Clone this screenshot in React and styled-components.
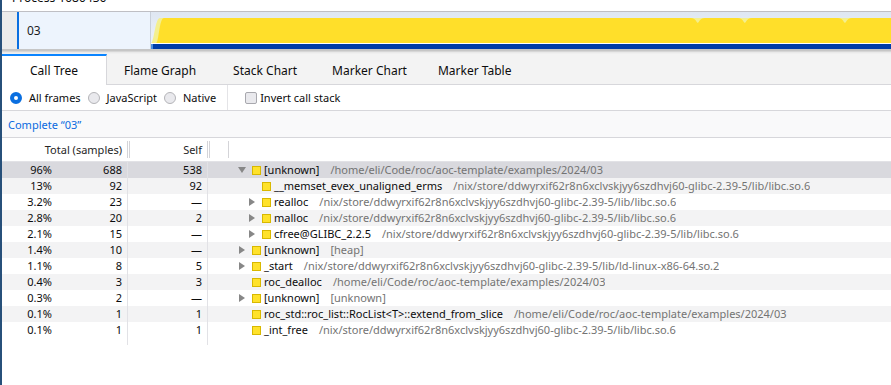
import React from "react";
import styled, { createGlobalStyle } from "styled-components";

const Global = createGlobalStyle`
  html, body { margin: 0; padding: 0; background: #fff; }
  body { font-family: "Noto Sans", "Open Sans", sans-serif; color: #0c0c0d; }
  * { box-sizing: border-box; }
`;

const Page = styled.div`
  width: 891px;
  height: 385px;
  overflow: hidden;
  border-left: 2px solid #27507a;
  display: flex;
  flex-direction: column;
  background: #fff;
`;

const ProcessHeader = styled.div`
  height: 12px;
  overflow: hidden;
  padding-left: 10px;
  border-bottom: 1px solid #bfbfc4;
  font-size: 12px;
`;

const ProcessTitle = styled.div`
  line-height: 16px;
  margin-top: -10px;
  color: #0c0c0d;
`;

const TrackRow = styled.div`
  display: flex;
  height: 37px;
`;

const TrackIndent = styled.div`
  width: 15px;
  background: #ececec;
  flex-shrink: 0;
`;

const TrackLabel = styled.div`
  width: 134px;
  flex-shrink: 0;
  background: #edf4fd;
  border-left: 2px solid #0a6fe0;
  border-right: 1px solid #c9d0da;
  display: flex;
  align-items: center;
  padding-left: 8px;
  font-size: 12px;
  color: #1c1c1e;
`;

const TrackGraph = styled.div`
  flex: 1;
  display: flex;
  flex-direction: column;
  background: linear-gradient(#dfe7f2, #eef3fa);
`;

const GraphSvg = styled.svg`
  display: block;
  width: 100%;
  height: 31px;
`;

const GraphGap = styled.div`
  height: 1px;
  background: #fff;
`;

const CpuBar = styled.div`
  height: 5px;
  background: #003da8;
  border-left: 2px solid #4a8ee0;
`;

const Splitter = styled.div`
  height: 5px;
  background: linear-gradient(#c6c6c6 0, #c6c6c6 2px, #e6e6e6 3px, #f2f2f2 5px);
`;

const TabBar = styled.div`
  display: flex;
  height: 31px;
  background: #f3f3f3;
  border-bottom: 1px solid #d7d7db;
`;

const Tab = styled.div`
  display: flex;
  align-items: center;
  justify-content: center;
  font-size: 12px;
  color: #0c0c0d;
  padding: 0 ${(p) => p.$pad}px;
  ${(p) =>
    p.$selected
      ? `background:#fff;border-top:2px solid #0a84ff;border-right:1px solid #d7d7db;margin-bottom:-1px;padding-bottom:1px;`
      : `border-top:2px solid transparent;`}
`;

const SettingsBar = styled.div`
  display: flex;
  align-items: center;
  height: 26px;
  border-bottom: 1px solid #d7d7db;
  font-size: 11px;
  color: #0c0c0d;
`;

const RadioGroup = styled.div`
  display: flex;
  align-items: center;
  height: 100%;
  padding-left: 8px;
  padding-right: 4px;
  border-right: 1px solid #e4e4e7;
`;

const RadioLabel = styled.label`
  display: flex;
  align-items: center;
  margin-right: 7px;
`;

const Radio = styled.span`
  width: 12px;
  height: 12px;
  border-radius: 50%;
  margin-right: 7px;
  ${(p) =>
    p.$checked
      ? `border:4px solid #0a6fe0;background:#fff;`
      : `border:1px solid #b4b4b8;background:#e9e9ed;`}
`;

const CheckLabel = styled.label`
  display: flex;
  align-items: center;
  margin-left: 17px;
`;

const Checkbox = styled.span`
  width: 12px;
  height: 12px;
  border: 1px solid #a8a8ae;
  border-radius: 2px;
  background: #e9e9ed;
  margin-right: 3px;
`;

const Breadcrumb = styled.div`
  height: 27px;
  display: flex;
  align-items: center;
  padding-left: 6px;
  font-size: 11px;
  color: #0a6ae0;
  background: #f9f9fa;
  border-bottom: 1px solid #d7d7db;
`;

const TreeHeader = styled.div`
  display: flex;
  align-items: center;
  height: 24px;
  border-bottom: 1px solid #e2e2e6;
  font-size: 11px;
  color: #262626;
`;

const HeaderCell = styled.div`
  width: ${(p) => p.$w}px;
  flex-shrink: 0;
  text-align: right;
  padding-right: 5px;
`;

const Resizer = styled.div`
  width: 3px;
  height: 17px;
  border-left: 1px solid #d4d4d8;
  border-right: 1px solid #d4d4d8;
  flex-shrink: 0;
`;

const HeaderSpacer = styled.div`
  width: 18px;
  flex-shrink: 0;
`;

const HeaderTreeCell = styled.div`
  height: 17px;
  border-left: 1px solid #d4d4d8;
  flex: 1;
`;

const TreeBody = styled.div`
  display: flex;
  flex-direction: column;
  font-size: 11px;
`;

const Row = styled.div`
  display: flex;
  height: 16px;
  line-height: 16px;
  white-space: nowrap;
  background: ${(p) => (p.$selected ? "#d9d9de" : p.$odd ? "#f3f3f4" : "#fff")};
`;

const NumCell = styled.div`
  width: ${(p) => p.$w}px;
  flex-shrink: 0;
  text-align: right;
  padding-right: ${(p) => p.$pr || 0}px;
  border-right: ${(p) => (p.$border ? "1px solid #e2e2e6" : "none")};
  color: #0c0c0d;
`;

const TreeCell = styled.div`
  display: flex;
  align-items: center;
  padding-left: ${(p) => 28 + p.$depth * 10}px;
  overflow: hidden;
`;

const Twisty = styled.span`
  width: 12px;
  height: 16px;
  display: flex;
  align-items: center;
  justify-content: center;
  flex-shrink: 0;
  margin-right: 4px;
`;

const CategorySwatch = styled.span`
  width: 9px;
  height: 9px;
  background: #ffe22b;
  border: 1px solid #d8b800;
  flex-shrink: 0;
  margin-right: 3px;
`;

const FuncName = styled.span`
  color: #0c0c0d;
`;

const LibName = styled.span`
  color: #737373;
  margin-left: 11px;
`;

const Filler = styled.div`
  display: flex;
  height: 7px;
`;

const TwistyIcon = ({ open }) => (
  <svg width="10" height="10" viewBox="0 0 10 10">
    {open ? (
      <polygon points="1,2 9,2 5,8" fill="#878787" />
    ) : (
      <polygon points="2,1 8,5 2,9" fill="#878787" />
    )}
  </svg>
);

const LIBC = "/nix/store/ddwyrxif62r8n6xclvskjyy6szdhvj60-glibc-2.39-5/lib/libc.so.6";
const HOME = "/home/eli/Code/roc/aoc-template/examples/2024/03";

const rows = [
  ["96%", "688", "538", 0, "open", "[unknown]", HOME],
  ["13%", "92", "92", 1, "leaf", "__memset_evex_unaligned_erms", LIBC],
  ["3.2%", "23", "—", 1, "closed", "realloc", LIBC],
  ["2.8%", "20", "2", 1, "closed", "malloc", LIBC],
  ["2.1%", "15", "—", 1, "closed", "cfree@GLIBC_2.2.5", LIBC],
  ["1.4%", "10", "—", 0, "closed", "[unknown]", "[heap]"],
  ["1.1%", "8", "5", 0, "closed", "_start", "/nix/store/ddwyrxif62r8n6xclvskjyy6szdhvj60-glibc-2.39-5/lib/ld-linux-x86-64.so.2"],
  ["0.4%", "3", "3", 0, "leaf", "roc_dealloc", HOME],
  ["0.3%", "2", "—", 0, "closed", "[unknown]", "[unknown]"],
  ["0.1%", "1", "1", 0, "leaf", "roc_std::roc_list::RocList<T>::extend_from_slice", HOME],
  ["0.1%", "1", "1", 0, "leaf", "_int_free", LIBC],
];

const tabs = [
  ["Call Tree", 28, true],
  ["Flame Graph", 17],
  ["Stack Chart", 20],
  ["Marker Chart", 15],
  ["Marker Table", 16],
];

const notch = (x) => `L${x - 7},6 Q${x - 3},6 ${x - 1},10 L${x},11 L${x + 1},10 Q${x + 3},6 ${x + 7},6`;

const brightPath =
  `M5,31 C8,31 8,6 13,6 ` +
  notch(546) + " " + notch(593) + " " + notch(693) +
  ` L739,6 L739,31 Z`;

export default function App() {
  return (
    <>
      <Global />
      <Page>
        <ProcessHeader>
          <ProcessTitle>Process 1080436</ProcessTitle>
        </ProcessHeader>
        <TrackRow>
          <TrackIndent />
          <TrackLabel>03</TrackLabel>
          <TrackGraph>
            <GraphSvg viewBox="0 0 739 31" preserveAspectRatio="none">
              <path d="M0,31 C3,31 4,6 9,6 L739,6 L739,31 Z" fill="#f4ef8e" />
              <path d={brightPath} fill="#ffdf2a" />
            </GraphSvg>
            <GraphGap />
            <CpuBar />
          </TrackGraph>
        </TrackRow>
        <Splitter />
        <TabBar>
          {tabs.map(([label, pad, sel]) => (
            <Tab key={label} $pad={pad} $selected={sel}>
              {label}
            </Tab>
          ))}
        </TabBar>
        <SettingsBar>
          <RadioGroup>
            <RadioLabel>
              <Radio $checked />
              All frames
            </RadioLabel>
            <RadioLabel>
              <Radio />
              JavaScript
            </RadioLabel>
            <RadioLabel>
              <Radio />
              Native
            </RadioLabel>
          </RadioGroup>
          <CheckLabel>
            <Checkbox />
            Invert call stack
          </CheckLabel>
        </SettingsBar>
        <Breadcrumb>Complete “03”</Breadcrumb>
        <TreeHeader>
          <HeaderCell $w={125}>Total (samples)</HeaderCell>
          <Resizer />
          <HeaderCell $w={77}>Self</HeaderCell>
          <Resizer />
          <HeaderSpacer />
          <HeaderTreeCell />
        </TreeHeader>
        <TreeBody>
          {rows.map(([pct, total, self, depth, state, name, lib], i) => (
            <Row key={i} $selected={i === 0} $odd={i % 2 === 1}>
              <NumCell $w={50}>{pct}</NumCell>
              <NumCell $w={76} $pr={5} $border>
                {total}
              </NumCell>
              <NumCell $w={80} $pr={5} $border>
                {self}
              </NumCell>
              <TreeCell $depth={depth}>
                <Twisty>{state !== "leaf" && <TwistyIcon open={state === "open"} />}</Twisty>
                <CategorySwatch />
                <FuncName>{name}</FuncName>
                <LibName>{lib}</LibName>
              </TreeCell>
            </Row>
          ))}
          <Filler>
            <NumCell $w={126} $pr={5} $border />
            <NumCell $w={80} $pr={5} $border />
          </Filler>
        </TreeBody>
      </Page>
    </>
  );
}
